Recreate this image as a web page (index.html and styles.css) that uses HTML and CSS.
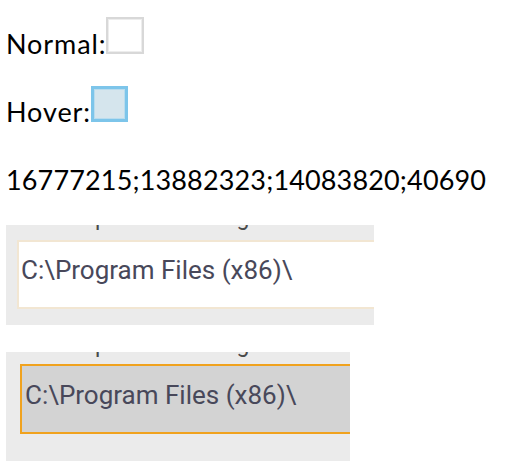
FILE: index.html
```html
<!DOCTYPE html>
<html>
<head>
<meta charset="utf-8">
<link rel="stylesheet" href="styles.css">
</head>
<body>
<p class="row row-label">Normal:<span class="chk chk-normal"></span></p>
<p class="row row-label">Hover:<span class="chk chk-hover"></span></p>
<p class="row row-num">16777215;13882323;14083820;40690</p>
<div class="shot shot-normal">
  <div class="label">Setup folder setting</div>
  <div class="field">C:\Program Files (x86)\</div>
</div>
<div class="shot shot-hover">
  <div class="label">Setup folder setting</div>
  <div class="field">C:\Program Files (x86)\</div>
</div>
</body>
</html>
```
FILE: styles.css
```css
html, body {
  margin: 0;
  background: #ffffff;
}
body {
  padding-top: 17px;
  font-family: Lato, "Open Sans", sans-serif;
  font-size: 27px;
  color: #000;
}
.row {
  margin: 0 0 26px;
  padding-left: 6px;
  line-height: 1.2;
}
.row-label {
  letter-spacing: 0.9px;
}
.row-num {
  margin-top: 35px;
  margin-bottom: 29px;
  letter-spacing: 0.15px;
}
.chk {
  display: inline-block;
  box-sizing: border-box;
  vertical-align: baseline;
}
.chk-normal {
  width: 38px;
  height: 37px;
  border: 2px solid #d8d8d8;
  box-shadow: inset 0 0 0 1px #ededed;
  background: #fff;
}
.chk-hover {
  width: 37px;
  height: 36px;
  border: 3px solid #7dc5ea;
  box-shadow: inset 0 0 0 1px #b9dcee;
  background: #d5e5ed;
}
.shot {
  margin-left: 6px;
  overflow: hidden;
  background: #ebebeb;
  font-family: Roboto, "Liberation Sans", sans-serif;
}
.shot-normal {
  width: 368px;
  height: 100px;
  margin-bottom: 27px;
}
.shot-hover {
  width: 344px;
  height: 109px;
}
.label {
  font-size: 23px;
  line-height: 28px;
  margin-top: -21px;
  padding-left: 43px;
  color: #4a4a4a;
  white-space: nowrap;
}
.field {
  box-sizing: border-box;
  width: 420px;
  font-size: 26px;
  line-height: 30px;
  color: #48485a;
  white-space: nowrap;
}
.shot-normal .field {
  margin: 8px 0 0 11px;
  height: 69px;
  padding: 13px 0 0 2px;
  border: 2px solid #f2e6d2;
  background: #fff;
}
.shot-hover .field {
  margin: 5px 0 0 14px;
  height: 70px;
  padding: 14px 0 0 3px;
  border: 2px solid #f0a21e;
  background: #d3d3d3;
}
```
